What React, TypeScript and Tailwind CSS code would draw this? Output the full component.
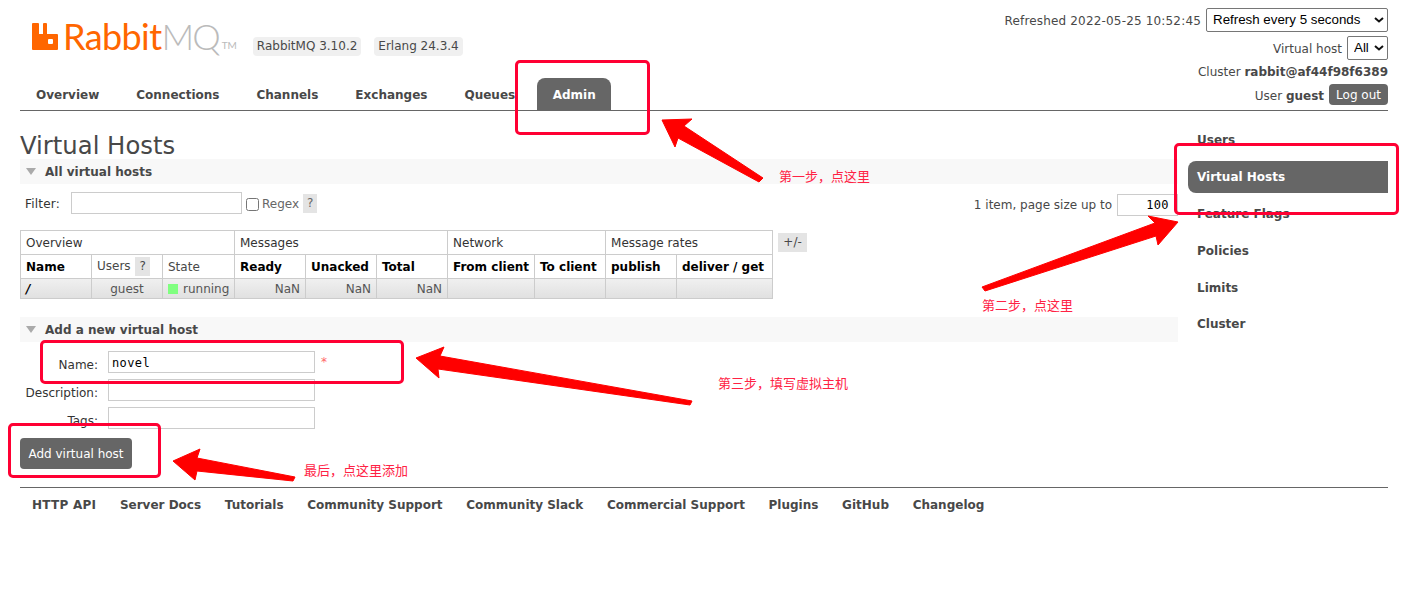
const navItems = ["Overview", "Connections", "Channels", "Exchanges", "Queues"];
const footerLinks = ["HTTP API", "Server Docs", "Tutorials", "Community Support", "Community Slack", "Commercial Support", "Plugins", "GitHub", "Changelog"];
const sideItems = ["Users", "Virtual Hosts", "Feature Flags", "Policies", "Limits", "Cluster"];

function Logo() {
  return (
    <div className="flex items-end h-[27px] font-['Lato',sans-serif] text-[36px] leading-[27px]">
      <svg width="26" height="27" viewBox="0 0 26 27" className="mr-[5px] shrink-0">
        <path fill="#ff6600" fillRule="evenodd" d="M0 1a1 1 0 0 1 1-1h5a1 1 0 0 1 1 1v10h4V1a1 1 0 0 1 1-1h2a1 1 0 0 1 1 1v10h10a1 1 0 0 1 1 1v14a1 1 0 0 1-1 1H1a1 1 0 0 1-1-1zM16 17v3a1 1 0 0 0 1 1h3a1 1 0 0 0 1-1v-3a1 1 0 0 0-1-1h-3a1 1 0 0 0-1 1z" />
      </svg>
      <span className="text-[#ff6600] tracking-[-0.6px]">Rabbit</span>
      <span className="text-[#bbbbbb] font-light tracking-[-2px]">MQ</span>
      <span className="text-[#bbbbbb] text-[10px] leading-[10px] ml-[3px]">TM</span>
    </div>
  );
}

function Badge({ children }: { children: string }) {
  return <span className="rounded-[4px] bg-[#f0f0f0] px-[4px] h-[19px] leading-[19px] text-[#484848]">{children}</span>;
}

function HelpMark({ children = "?" }: { children?: string }) {
  return <span className="inline-block bg-[#e4e4e4] px-[4px] h-[19px] leading-[19px] text-[#666666]">{children}</span>;
}

function Chevron() {
  return (
    <svg width="10" height="6" viewBox="0 0 10 6" className="absolute right-[4px] top-[9px] pointer-events-none">
      <path d="M1 1l4 3.5L9 1" fill="none" stroke="#111111" strokeWidth="2" />
    </svg>
  );
}

function Select({ width, label }: { width: string; label: string }) {
  return (
    <div className={`relative ml-[5px] ${width}`}>
      <select className="w-full h-[24px] rounded-[2px] border border-[#767676] bg-white pl-[6px] text-[13.33px] text-black font-['Liberation_Sans',sans-serif] appearance-none">
        <option>{label}</option>
      </select>
      <Chevron />
    </div>
  );
}

function Header() {
  return (
    <header className="flex justify-between h-[111px] border-b border-[#666666]">
      <div className="flex flex-col">
        <div className="flex items-start pl-[12px] pt-[23px] h-[78px]">
          <Logo />
          <div className="flex gap-[13px] ml-[16px] mt-[14px]">
            <Badge>RabbitMQ 3.10.2</Badge>
            <Badge>Erlang 24.3.4</Badge>
          </div>
        </div>
        <nav className="flex gap-[7px] ml-[1px] font-bold text-[#484848]">
          {navItems.map((item) => (
            <a key={item} className="h-[32px] px-[15px] leading-[34px]">{item}</a>
          ))}
          <a className="h-[32px] w-[74px] text-center leading-[34px] bg-[#666666] text-white rounded-t-[8px]">Admin</a>
        </nav>
      </div>
      <div className="flex flex-col items-end text-[#484848] pt-[8px]">
        <div className="flex items-center h-[24px]">
          <span className="tracking-[0.17px] mt-[2px]">Refreshed 2022-05-25 10:52:45</span>
          <Select width="w-[182px]" label="Refresh every 5 seconds" />
        </div>
        <div className="flex items-center h-[24px] mt-[4px]">
          <span className="mt-[2px]">Virtual host</span>
          <Select width="w-[41px]" label="All" />
        </div>
        <div className="h-[20px] leading-[20px] mt-[2px]">Cluster <b>rabbit@af44f98f6389</b></div>
        <div className="flex items-center h-[21px] mt-[2px]">
          <span className="mt-[2px]">User <b>guest</b></span>
          <span className="ml-[5px] rounded-[4px] bg-[#666666] text-white px-[7px] h-[21px] leading-[23px]">Log out</span>
        </div>
      </div>
    </header>
  );
}

function SectionHead({ title }: { title: string }) {
  return (
    <div className="flex items-center h-[25px] bg-[#f8f8f8] pl-[6px] font-bold text-[#484848]">
      <span className="mr-[9px] w-0 h-0 border-x-[5.5px] border-x-transparent border-t-[7px] border-t-[#aaaaaa]" />
      {title}
    </div>
  );
}

function VhostTable() {
  const th = "border border-[#cccccc] px-[5px] text-left h-[24px] font-bold text-black whitespace-nowrap overflow-hidden";
  const group = "border border-[#cccccc] px-[5px] text-left h-[24px] font-normal text-[#333333]";
  const td = "border border-[#cccccc] px-[5px] h-[20px] text-right text-[#555555]";
  return (
    <table className="border-collapse table-fixed w-[752px]">
      <colgroup>
        <col className="w-[71px]" /><col className="w-[71px]" /><col className="w-[72px]" />
        <col className="w-[71px]" /><col className="w-[71px]" /><col className="w-[71px]" />
        <col className="w-[87px]" /><col className="w-[71px]" /><col className="w-[71px]" /><col className="w-[96px]" />
      </colgroup>
      <thead>
        <tr>
          <th colSpan={3} className={group}>Overview</th>
          <th colSpan={3} className={group}>Messages</th>
          <th colSpan={2} className={group}>Network</th>
          <th colSpan={2} className={group}>Message rates</th>
        </tr>
        <tr>
          <th className={th}>Name</th>
          <th className={`${th} !font-normal !text-[#484848]`}>Users <span className="inline-block bg-[#e4e4e4] px-[4px] h-[19px] leading-[19px] ml-[1px]">?</span></th>
          <th className={`${th} !font-normal !text-[#484848]`}>State</th>
          <th className={th}>Ready</th>
          <th className={th}>Unacked</th>
          <th className={th}>Total</th>
          <th className={th}>From client</th>
          <th className={th}>To client</th>
          <th className={th}>publish</th>
          <th className={th}>deliver / get</th>
        </tr>
      </thead>
      <tbody>
        <tr className="bg-gradient-to-b from-[#f0f0f0] to-[#e0e0e0]">
          <td className={`${td} !text-left font-bold italic !text-black`}>/</td>
          <td className={`${td} !text-center`}>guest</td>
          <td className={`${td} !text-left whitespace-nowrap`}>
            <span className="inline-block w-[10px] h-[10px] bg-[#80ff80] mr-[5px] align-[-1px]" />running
          </td>
          <td className={td}>NaN</td>
          <td className={td}>NaN</td>
          <td className={td}>NaN</td>
          <td className={td} /><td className={td} /><td className={td} /><td className={td} />
        </tr>
      </tbody>
    </table>
  );
}

function FormRow({ label, value, required }: { label: string; value?: string; required?: boolean }) {
  return (
    <div className="flex items-center h-[22px] mb-[6px]">
      <label className="w-[78px] text-right text-[#333333] mt-[6px]">{label}</label>
      <input
        readOnly
        value={value ?? ""}
        className="ml-[10px] w-[207px] h-[22px] border border-[#cccccc] px-[3px] pt-[1px] text-[12px] text-black font-['DejaVu_Sans_Mono',monospace] tracking-[0.4px]"
      />
      {required && <span className="ml-[6px] text-[#ff6666]">*</span>}
    </div>
  );
}

function Main() {
  return (
    <main className="flex-1">
      <h1 className="text-[24.3px] leading-[28px] text-[#484848] pt-[21px] h-[48px]">Virtual Hosts</h1>
      <SectionHead title="All virtual hosts" />
      <div className="flex justify-between items-center h-[24px] mt-[7px] pl-[5px] text-[#484848]">
        <div className="flex items-center">
          <span className="text-[#333333] tracking-[0.2px] mt-[2px]">Filter:</span>
          <input readOnly className="ml-[11px] w-[171px] h-[22px] border border-[#cccccc]" />
          <input type="checkbox" readOnly className="ml-[4px] mt-[2px] w-[13px] h-[13px] appearance-auto" />
          <span className="ml-[3px] mr-[4px] mt-[2px] text-[#666666]">Regex</span>
          <HelpMark />
        </div>
        <div className="flex items-center mt-[4px]">
          <span>1 item, page size up to</span>
          <input readOnly value="100" className="ml-[5px] w-[61px] h-[22px] border border-[#cccccc] pr-[8px] text-right text-[12px] text-black font-['DejaVu_Sans_Mono',monospace] tracking-[0.4px]" />
        </div>
      </div>
      <div className="flex items-start mt-[15px]">
        <VhostTable />
        <span className="ml-[5px] mt-[3px] w-[29px] text-center bg-[#e4e4e4] h-[19px] leading-[19px] text-[#484848]">+/-</span>
      </div>
      <div className="mt-[18px]">
        <SectionHead title="Add a new virtual host" />
      </div>
      <div className="mt-[9px]">
        <FormRow label="Name:" value="novel" required />
        <FormRow label="Description:" />
        <FormRow label="Tags:" />
      </div>
      <button className="block mt-[9px] h-[31px] w-[112px] rounded-[4px] bg-[#666666] text-white text-[12px]">Add virtual host</button>
    </main>
  );
}

function Sidebar() {
  return (
    <aside className="w-[200px] ml-[10px] pt-[13px] font-bold text-[#484848]">
      {sideItems.map((item) => (
        <a
          key={item}
          className={`block h-[32px] leading-[32px] pl-[9px] ${item === "Limits" ? "mb-[4px]" : "mb-[5px]"} ${item === "Virtual Hosts" ? "bg-[#666666] text-white rounded-l-[8px]" : ""}`}
        >
          {item}
        </a>
      ))}
    </aside>
  );
}

function Annotations() {
  const boxes = [
    "left-[515px] top-[60px] w-[135px] h-[75px]",
    "left-[1174px] top-[143px] w-[225px] h-[72px]",
    "left-[40px] top-[340px] w-[364px] h-[44px]",
    "left-[8px] top-[423px] w-[153px] h-[55px]",
  ];
  const notes = [
    { text: "第一步，点这里", cls: "left-[779px] top-[168px]" },
    { text: "第二步，点这里", cls: "left-[982px] top-[297px]" },
    { text: "第三步，填写虚拟主机", cls: "left-[718px] top-[375px]" },
    { text: "最后，点这里添加", cls: "left-[304px] top-[462px]" },
  ];
  return (
    <>
      {boxes.map((cls) => (
        <div key={cls} className={`absolute ${cls} border-[3px] border-[#ff0033] rounded-[5px]`} />
      ))}
      <svg className="absolute left-0 top-0 pointer-events-none" width="1409" height="600">
        <g fill="#ff0000" stroke="#ff0000" strokeWidth="1" strokeLinejoin="round">
          <polygon points="662,120 692,119 684,126 763,178 759,182 678,138 675,147" />
          <polygon points="1148,216 1178,222 1158,245 1156,236 985,291 982,287 1155,223" />
          <polygon points="416,358 444,347 440,356 692,401 690,405 438,369 439,378" />
          <polygon points="173,461 200,449 197,458 295,477 293,481 197,471 195,480" />
        </g>
      </svg>
      {notes.map((n) => (
        <span key={n.text} className={`absolute ${n.cls} text-[13px] leading-[16px] text-[#ff2244] whitespace-nowrap font-['Noto_Sans_CJK_SC',sans-serif]`}>
          {n.text}
        </span>
      ))}
    </>
  );
}

export default function App() {
  return (
    <div className="relative w-[1409px] h-[600px] bg-white overflow-hidden pl-[20px] pr-[21px] text-[12px] font-['DejaVu_Sans',sans-serif]">
      <Header />
      <div className="flex">
        <Main />
        <Sidebar />
      </div>
      <footer className="mt-[18px] border-t border-[#666666] pt-[9px] flex gap-[23.7px] pl-[12px] font-bold text-[#484848]">
        {footerLinks.map((link) => (
          <a key={link} className={`leading-[16px] ${link === "HTTP API" ? "tracking-[0.25px]" : ""}`}>{link}</a>
        ))}
      </footer>
      <Annotations />
    </div>
  );
}
